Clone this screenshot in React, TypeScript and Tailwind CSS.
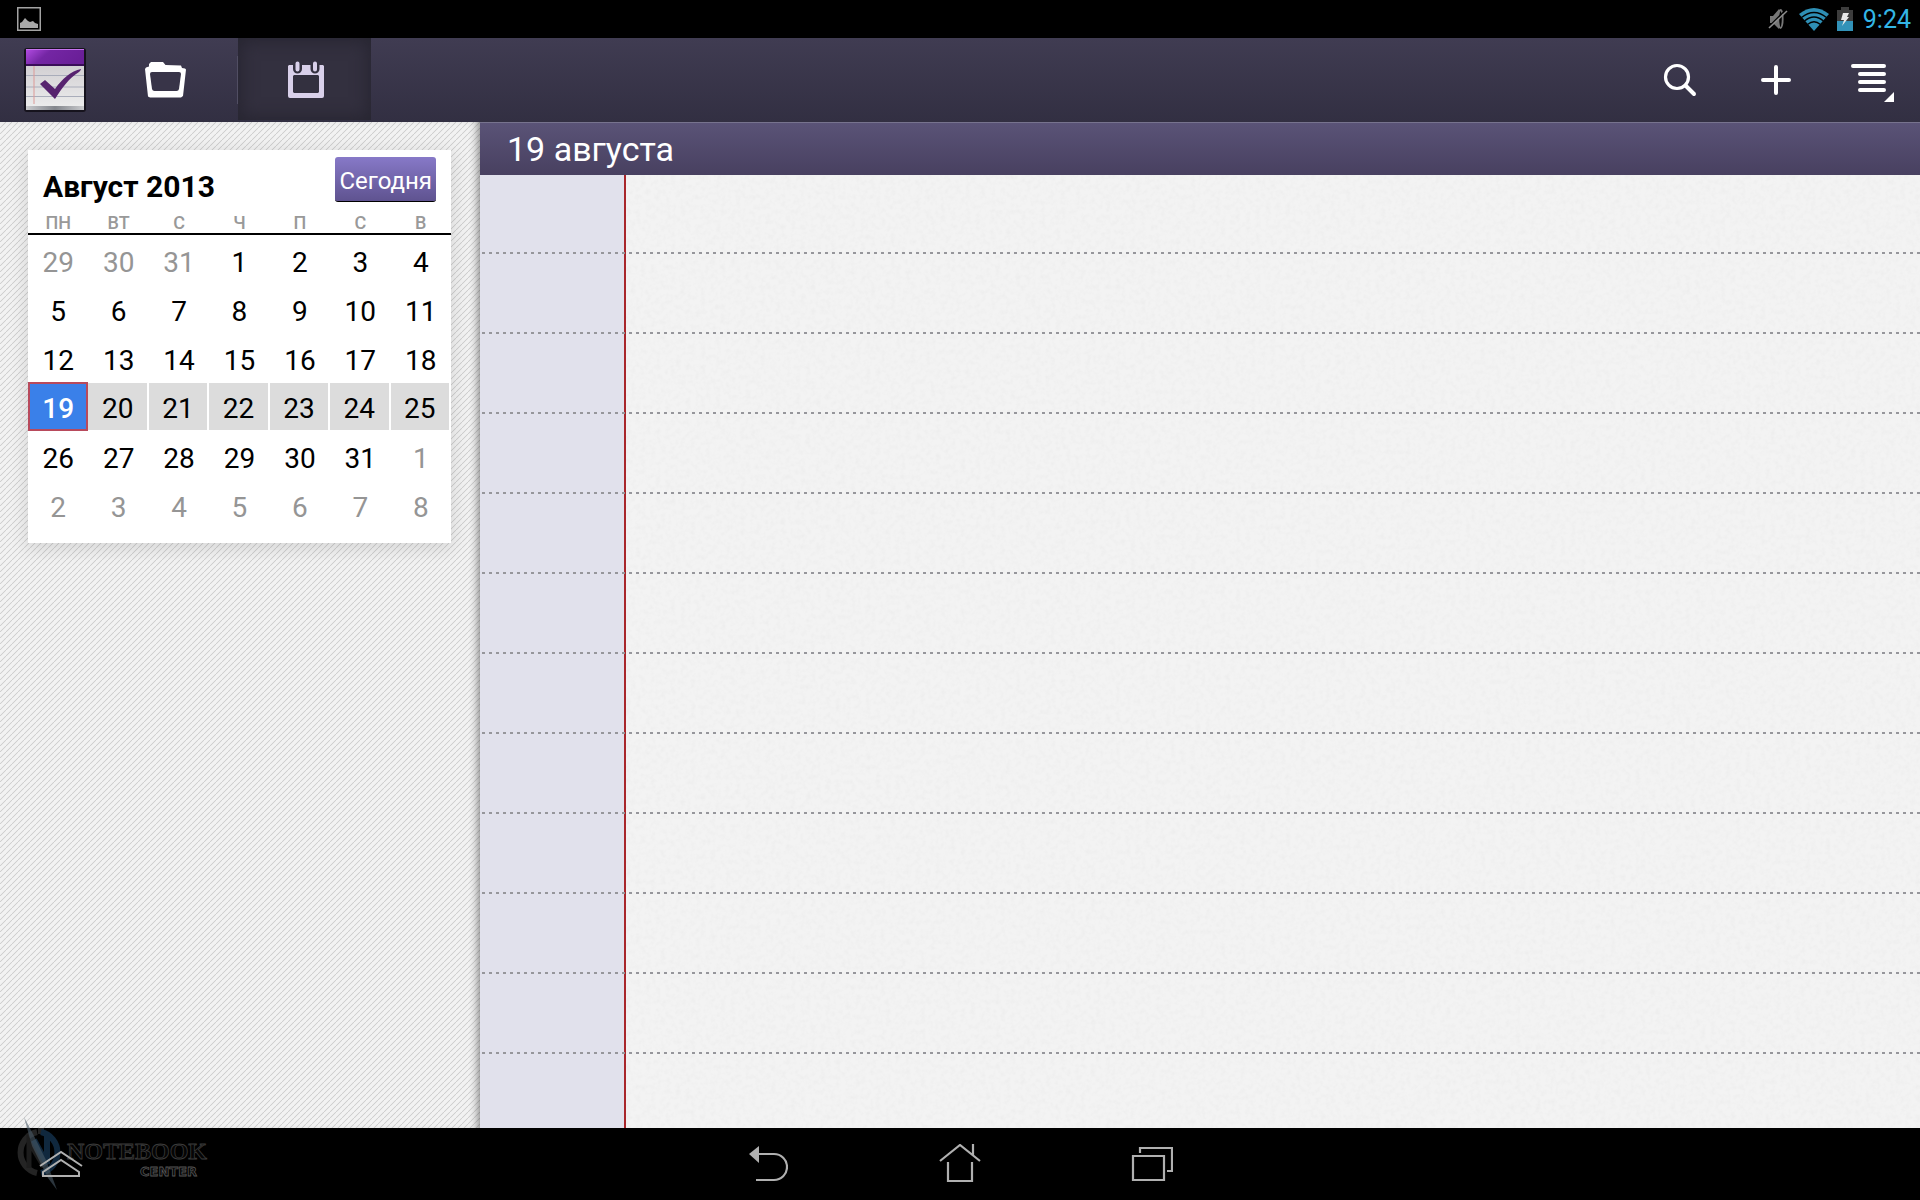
import React from 'react';

const weekdays = ['ПН', 'ВТ', 'С', 'Ч', 'П', 'С', 'В'];
const firstVisible = new Date(2013, 6, 29);
const weeks = Array.from({ length: 6 }, (_, w) =>
  Array.from({ length: 7 }, (_, d) => {
    const date = new Date(firstVisible);
    date.setDate(firstVisible.getDate() + w * 7 + d);
    return { day: date.getDate(), current: date.getMonth() === 7 };
  }),
);

function StatusBar() {
  return (
    <div className="flex h-[38px] shrink-0 items-center justify-between bg-black pl-[17px] pr-[9px]">
      <svg width="24" height="24" viewBox="0 0 24 24" aria-hidden="true">
        <rect x="0.75" y="0.75" width="22.5" height="22.5" fill="none" stroke="#a3a3a3" strokeWidth="1.5" />
        <path d="M3 21v-5l2-1 3-4 3 3 2 1 3-1 2 2 3 1v4z" fill="#a8a8a8" />
      </svg>
      <div className="flex items-center">
        <svg className="mr-[11px]" width="20" height="22" viewBox="0 0 20 22" aria-hidden="true">
          <path d="M2 8h3l6-7v20l-6-6H2z" fill="#777" />
          <ellipse cx="12.5" cy="11" rx="2.2" ry="9" fill="none" stroke="#777" strokeWidth="1.8" />
          <path d="M0 19.500 18 1.500" stroke="#000" strokeWidth="1.5" />
          <path d="M1 20 19 3" stroke="#8c8c8c" strokeWidth="1.6" />
        </svg>
        <svg className="mr-[8px]" width="30" height="23" viewBox="0 0 30 23" aria-hidden="true">
          <path d="M0 6Q15-6 30 6L15 23z" fill="#2e8fb5" />
          <path d="M2.5 9.5Q15-.5 27.5 9.5M5.5 13Q15 5 24.500 13M8.500 16.500Q15 11 21.500 16.500" fill="none" stroke="#000" strokeWidth="1.3" />
        </svg>
        <svg className="mr-[10px]" width="16" height="24" viewBox="0 0 16 24" aria-hidden="true">
          <path d="M4 0h8v3h4v11H0V3h4z" fill="#3d3d3d" />
          <path d="M0 14h16v10H0z" fill="#3292b8" />
          <path d="M6 6h6l-2 4h2l-7 9 2-6H4z" fill="#e8e8e8" />
        </svg>
        <span className="pt-[2px] text-[25px] leading-[36px] text-[#33b5e5]">9:24</span>
      </div>
    </div>
  );
}

function AppLogo() {
  return (
    <svg width="64" height="66" viewBox="0 0 64 66" role="img" aria-label="Tasks">
      <defs>
        <linearGradient id="purple" x1="0" y1="0" x2="1" y2="0.3">
          <stop offset="0" stopColor="#b04be0" />
          <stop offset="0.4" stopColor="#7426a4" />
          <stop offset="1" stopColor="#6a1f98" />
        </linearGradient>
        <linearGradient id="sheet" x1="0" y1="0" x2="0" y2="1">
          <stop offset="0" stopColor="#d2d0d3" />
          <stop offset="1" stopColor="#ececec" />
        </linearGradient>
        <linearGradient id="base" x1="0" y1="0" x2="1" y2="0">
          <stop offset="0" stopColor="#c9cacd" />
          <stop offset="0.5" stopColor="#83868c" />
          <stop offset="1" stopColor="#c9cacd" />
        </linearGradient>
      </defs>
      <rect x="1" y="1" width="62" height="64" rx="3" fill="#16131d" />
      <path d="M3 3h58v15H3z" fill="url(#purple)" />
      <path d="M3 2.500h58" stroke="#c773ee" />
      <path d="M3 17h58v2H3z" fill="#3a0e58" />
      <path d="M3 19h58v41H3z" fill="url(#sheet)" />
      <path d="M3 28.500h58M3 40h58M3 49.500h58" stroke="#a9adba" />
      <path d="M11 19v38" stroke="#dc9a97" />
      <path d="M3 59h58v4H3z" fill="url(#base)" />
      <path d="M17 37l5-4 10 9C39 32 48 24 58 22c0 1-1 2-2 3C46 31 39 41 32 52z" fill="#57236f" />
    </svg>
  );
}

function Toolbar() {
  return (
    <header className="flex h-[84px] shrink-0 items-stretch bg-linear-to-b from-[#403c52] to-[#322f42]">
      <div className="flex w-[108px] items-center justify-center pl-[2px]">
        <AppLogo />
      </div>
      <button aria-label="Папки" className="flex w-[129px] items-center pl-[37px]">
        <svg width="42" height="38" viewBox="0 0 42 38" aria-hidden="true">
          <path d="M3 35.500 0 8l1-1.500 3-1V3l2-2h12l2.500 3L36 4.500l1 2.500 3 .5 1 1-3 26.500-2 1.500H5z" fill="#fff" />
          <path d="M5 13q0-2 2-2h27q2 0 2 2l-2 15q-.4 2-2.500 2h-22q-2 0-2.500-2z" fill="#383448" />
        </svg>
      </button>
      <div className="flex items-start">
        <div className="mt-[18px] h-[48px] w-px bg-[#514e63]" />
        <button
          aria-label="Календарь"
          aria-pressed="true"
          className="flex h-[82px] w-[133px] items-center justify-center bg-[#33303f] pl-[2px] pt-[2px] shadow-[inset_0_0_16px_4px_#282632]"
        >
          <svg width="36" height="38" viewBox="0 0 36 38" aria-hidden="true">
            <path d="M1 4h34l1 1v30q0 2-2 2H2q-2 0-2-2V5zM6 14l-1 1v16l1 1h24l1-1V15l-1-1z" fill="#d9d0ea" fillRule="evenodd" />
            <path d="M9.500 0v8M27 0v8" stroke="#33303f" strokeWidth="9" strokeLinecap="round" />
            <path d="M9.500 2.500v6M27 2.500v6" stroke="#d9d0ea" strokeWidth="4" strokeLinecap="round" />
          </svg>
        </button>
      </div>
      <div className="ml-auto flex items-center text-white">
        <button aria-label="Поиск" className="flex w-[96px] items-center justify-center">
          <svg width="34" height="34" viewBox="0 0 34 34" fill="none" stroke="currentColor" aria-hidden="true">
            <circle cx="14" cy="14" r="11.500" strokeWidth="3.200" />
            <path d="M22.500 22.500 31 31" strokeWidth="4" strokeLinecap="round" />
          </svg>
        </button>
        <button aria-label="Добавить" className="flex w-[96px] items-center justify-center">
          <svg width="32" height="32" viewBox="0 0 32 32" stroke="currentColor" strokeWidth="4" strokeLinecap="round" aria-hidden="true">
            <path d="M16 3v26M3 16h26" />
          </svg>
        </button>
        <button aria-label="Меню" className="flex w-[96px] items-center justify-center pl-[2px] pt-[6px]">
          <svg width="44" height="38" viewBox="0 0 44 38" aria-hidden="true">
            <path d="M2 2h31M9 10h24M9 18h24M9 26h24" stroke="currentColor" strokeWidth="4" strokeLinecap="round" />
            <path d="M43 28v10H33z" fill="currentColor" />
          </svg>
        </button>
      </div>
    </header>
  );
}

function dayClass(week: number, index: number, current: boolean) {
  if (week === 3 && index === 0)
    return 'block h-[49px] w-full border-2 border-[#b84a5c] bg-[#3a80e9] font-medium leading-[49px] text-white';
  if (week === 3) return 'block h-[47px] w-[calc(100%-2px)] bg-[#dcdcdc] pt-[2px] leading-[47px] text-black';
  return current ? 'block h-[49px] w-full pt-[3px] text-black' : 'block h-[49px] w-full pt-[3px] text-[#959595]';
}

function Calendar() {
  return (
    <section className="bg-white shadow-[0_4px_16px_2px_rgba(0,0,0,0.11)]">
      <div className="flex h-[63px] items-start justify-between pl-[15px] pr-[15px] pt-[7px]">
        <h2 className="pt-[10px] text-[30px] font-bold leading-[40px] text-black">Август 2013</h2>
        <button className="h-[45px] rounded-[3px] border-b border-black bg-linear-to-b from-[#8779c8] to-[#5f5390] px-[4px] pt-[4px] text-[24px] leading-[40px] text-white">
          Сегодня
        </button>
      </div>
      <table className="w-full table-fixed border-collapse text-center">
        <thead>
          <tr className="h-[21px] border-b-2 border-black text-[18px] leading-[20px] text-[#999999]">
            {weekdays.map((name, i) => (
              <th key={i} scope="col" className="p-0 font-medium">
                {name}
              </th>
            ))}
          </tr>
        </thead>
        <tbody>
          {weeks.map((days, w) => (
            <tr key={w} className="h-[49px] text-[28px] leading-[49px]">
              {days.map(({ day, current }, i) => (
                <td key={i} className="p-0">
                  <button className={dayClass(w, i, current)}>{day}</button>
                </td>
              ))}
            </tr>
          ))}
        </tbody>
      </table>
      <div className="h-[14px]" />
    </section>
  );
}

function DayPlanner() {
  return (
    <main className="flex min-w-0 flex-1 flex-col">
      <div className="h-[53px] shrink-0 border-t border-[#77738e] bg-linear-to-b from-[#5a5377] to-[#484060] pl-[27px] text-[34px] leading-[52px] text-white">
        19 августа
      </div>
      <div className="relative flex flex-1">
        <div className="w-[144px] bg-[#e1e1ec]" />
        <div className="w-[2px] bg-[#a8262b]" />
        <div className="relative flex-1 bg-[#f3f3f3]">
          <svg className="absolute inset-0 h-full w-full opacity-10" aria-hidden="true">
            <filter id="grain">
              <feTurbulence type="fractalNoise" baseFrequency="0.2" numOctaves="2" seed="4" />
              <feColorMatrix values="0 0 0 0 0.6 0 0 0 0 0.6 0 0 0 0 0.6 2.500 0 0 0 -1" />
            </filter>
            <rect width="100%" height="100%" filter="url(#grain)" />
          </svg>
        </div>
        <div className="absolute inset-0 flex flex-col overflow-hidden pl-[2px]">
          {Array.from({ length: 11 }, (_, i) => (
            <div key={i} className={i === 0 ? 'flex h-[79px] shrink-0 flex-col justify-end' : 'flex h-[80px] shrink-0 flex-col justify-end'}>
              <div className="h-[2px] bg-[repeating-linear-gradient(90deg,#96969b_0_3px,transparent_3px_7px)]" />
            </div>
          ))}
        </div>
      </div>
    </main>
  );
}

function NavBar() {
  return (
    <nav className="relative flex h-[72px] shrink-0 items-center justify-center gap-[48px] bg-black text-[#b0b0b0]">
      <div className="absolute bottom-0 left-0">
        <svg width="240" height="102" viewBox="0 0 240 102" aria-hidden="true">
          <path d="M37 34A21 21 0 0 0 37 75M44 33h-6" fill="none" stroke="#242424" strokeWidth="6" />
          <path d="M29 70V44l15 25" fill="none" stroke="#1d1d1d" strokeWidth="5" />
          <path d="M41 34A21 21 0 0 1 41 75M34 42l13 24V36" fill="none" stroke="#10283e" strokeWidth="6" />
          <path d="M24 19 34 38 46 62 57 92 48 80 32 48z" fill="#4a5a68" opacity="0.6" />
          <text x="67" y="61" fill="#050505" stroke="#3b3b3b" strokeWidth="0.8" fontFamily="Liberation Serif, serif" fontWeight="700" fontSize="24">NOTEBOOK</text>
          <text x="140" y="78" fill="#050505" stroke="#555" strokeWidth="0.8" fontFamily="DejaVu Sans, sans-serif" fontSize="13" fontWeight="700">CENTER</text>
        </svg>
      </div>
      <button aria-label="Показать панель" className="absolute bottom-[22px] left-[39px]">
        <svg width="44" height="28" viewBox="0 0 44 28" fill="none" stroke="currentColor" strokeWidth="2" aria-hidden="true">
          <path d="M1 16 22 2l21 14M4 26v-4L22 10l18 12v4z" />
        </svg>
      </button>
      <button aria-label="Назад" className="flex w-[144px] justify-center">
        <svg width="40" height="40" viewBox="0 0 40 40" fill="none" stroke="currentColor" strokeWidth="2.200" aria-hidden="true">
          <path d="M9 10h17a13 13 0 0 1 0 26H8" />
          <path d="M1 10 11 2v17z" fill="currentColor" stroke="none" />
        </svg>
      </button>
      <button aria-label="Домой" className="flex w-[144px] justify-center">
        <svg width="42" height="40" viewBox="0 0 42 40" fill="none" stroke="currentColor" strokeWidth="2.200" aria-hidden="true">
          <path d="M1 17 21 1l20 16M34 0v11M9 18v19h24V18" />
        </svg>
      </button>
      <button aria-label="Недавние приложения" className="flex w-[144px] justify-center">
        <svg width="42" height="36" viewBox="0 0 42 36" fill="none" stroke="currentColor" strokeWidth="2.200" aria-hidden="true">
          <path d="M2 10h31v24H2zM9 7V2h32v23h-5" />
        </svg>
      </button>
    </nav>
  );
}

export default function App() {
  return (
    <div className="flex h-screen flex-col overflow-hidden font-[Roboto,sans-serif]">
      <StatusBar />
      <Toolbar />
      <div className="flex min-h-0 flex-1">
        <aside className="w-1/4 shrink-0 bg-[#f2f2f2] bg-[linear-gradient(135deg,#f2f2f2_0_40%,#d0d0d0_50%,#f2f2f2_60%)] bg-size-[6px_6px] pl-[28px] pr-[29px] pt-[28px] shadow-[inset_-8px_0_8px_-6px_rgba(0,0,0,0.45)]">
          <Calendar />
        </aside>
        <DayPlanner />
      </div>
      <NavBar />
    </div>
  );
}
